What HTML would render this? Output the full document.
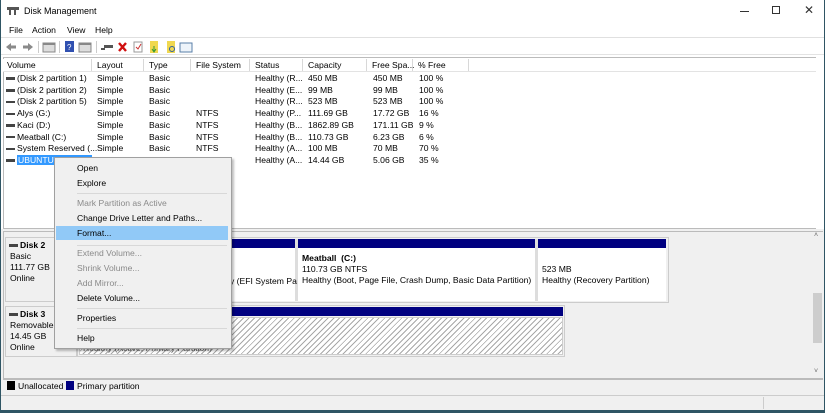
<!DOCTYPE html><html><head><meta charset="utf-8"><style>
*{margin:0;padding:0;box-sizing:border-box}
body{width:825px;height:413px;overflow:hidden;background:#2f5564;font-family:"Liberation Sans",sans-serif;font-size:8.6px;color:#000;position:relative}
.a{position:absolute}
.win{left:1px;top:0;width:823px;height:410px;background:#fff}
.t{position:absolute;white-space:nowrap}
.g{color:#8a8a8a}
.hdr{top:59px;height:13px;left:2px;width:813px;background:#fff;border-bottom:1px solid #e3e3e3}
.col{position:absolute;top:0;height:12px;border-right:1px solid #d8d8d8}
.dash{display:inline-block;width:9px;height:2.5px;background:#444;vertical-align:middle;margin-right:2px}
.blue{background:#000080}
.hatch{background:repeating-linear-gradient(135deg,#fff 0 3px,#a8a8a8 3px 4px)}
</style></head><body>
<div class="a win">
<svg class="a" style="left:6px;top:6px" width="13" height="10"><rect x="0" y="1" width="12" height="3" fill="#555"/><rect x="2" y="4" width="2" height="5" fill="#555"/><rect x="7" y="4" width="2" height="5" fill="#555"/></svg>
<div class="t" style="left:23px;top:6px;font-size:9px">Disk Management</div>
<div class="a" style="left:739px;top:11px;width:9px;height:1px;background:#333"></div>
<div class="a" style="left:771px;top:6px;width:8px;height:8px;border:1px solid #333"></div>
<div class="t" style="left:803px;top:3px;font-size:12px;color:#333">✕</div>
<div class="t" style="left:8px;top:25px">File</div>
<div class="t" style="left:31px;top:25px">Action</div>
<div class="t" style="left:66px;top:25px">View</div>
<div class="t" style="left:94px;top:25px">Help</div>
<div class="a" style="left:0;top:37px;width:823px;height:1px;background:#e0e0e0"></div>
<svg class="a" style="left:4px;top:40px" width="190" height="14">
<path d="M1 7l5-4v2.5h5v3h-5v2.5z" fill="#8a8a8a"/><path d="M28 7l-5-4v2.5h-5v3h5v2.5z" fill="#8a8a8a"/>
<rect x="33" y="1" width="1" height="12" fill="#ccc"/>
<rect x="38" y="3" width="12" height="9" fill="#ddd" stroke="#888"/><rect x="38" y="3" width="12" height="2" fill="#888"/>
<rect x="54" y="1" width="1" height="12" fill="#ccc"/>
<rect x="60" y="1" width="9" height="11" fill="#3050b0"/><text x="62" y="10" font-size="8" fill="#fff">?</text>
<rect x="74" y="3" width="12" height="9" fill="#ddd" stroke="#888"/><rect x="74" y="3" width="12" height="2" fill="#888"/>
<rect x="91" y="1" width="1" height="12" fill="#ccc"/>
<rect x="99" y="5" width="9" height="3" fill="#555"/><rect x="96" y="8" width="4" height="2" fill="#555"/>
<path d="M114 3l7 8M121 3l-7 8" stroke="#d01010" stroke-width="2.4"/>
<rect x="129" y="2" width="8" height="10" fill="#fff" stroke="#999"/><path d="M131 7l2 2 3-5" stroke="#c33" fill="none"/>
<rect x="145" y="1" width="8" height="12" fill="#f0d850"/><path d="M149 6v6M147 9l2 3 2-3" stroke="#393" fill="none"/>
<rect x="162" y="1" width="8" height="12" fill="#f0d850"/><circle cx="167" cy="9" r="2.5" fill="none" stroke="#3060a0"/>
<rect x="175" y="3" width="12" height="9" fill="#eef4fa" stroke="#5a7fa8"/>
</svg>
<div class="a" style="left:0;top:54px;width:823px;height:1px;background:#e3e3e3"></div>
<div class="a" style="left:2px;top:57px;width:813px;height:172px;border:1px solid #bbb;border-right:none;background:#fff"></div>
<div class="a hdr">
<div class="col" style="left:0;width:89px"><span class="t" style="left:4px;top:1px">Volume</span></div>
<div class="col" style="left:89px;width:52px"><span class="t" style="left:5px;top:1px">Layout</span></div>
<div class="col" style="left:141px;width:47px"><span class="t" style="left:5px;top:1px">Type</span></div>
<div class="col" style="left:188px;width:59px"><span class="t" style="left:5px;top:1px">File System</span></div>
<div class="col" style="left:247px;width:53px"><span class="t" style="left:5px;top:1px">Status</span></div>
<div class="col" style="left:300px;width:64px"><span class="t" style="left:5px;top:1px">Capacity</span></div>
<div class="col" style="left:364px;width:46px"><span class="t" style="left:5px;top:1px">Free Spa...</span></div>
<div class="col" style="left:410px;width:56px"><span class="t" style="left:5px;top:1px">% Free</span></div>
</div>
<div class="a" style="left:5px;top:73px;width:480px">
<div style="position:relative;height:93px">
<div class="t" style="top:0px;left:0"><span class="dash"></span>(Disk 2 partition 1)</div>
<div class="t" style="top:11.7px;left:0"><span class="dash"></span>(Disk 2 partition 2)</div>
<div class="t" style="top:23.4px;left:0"><span class="dash"></span>(Disk 2 partition 5)</div>
<div class="t" style="top:35.1px;left:0"><span class="dash"></span>Alys (G:)</div>
<div class="t" style="top:46.8px;left:0"><span class="dash"></span>Kaci (D:)</div>
<div class="t" style="top:58.5px;left:0"><span class="dash"></span>Meatball (C:)</div>
<div class="t" style="top:70.2px;left:0"><span class="dash"></span>System Reserved (...</div>
<div class="t" style="top:81.9px;left:0"><span class="dash"></span><span style="background:#3399ff;color:#fff;padding:0 14px 0 1px">UBUNTU 16.04</span></div>
</div></div>
<div class="a" style="left:96px;top:73px;line-height:11.7px">Simple<br>Simple<br>Simple<br>Simple<br>Simple<br>Simple<br>Simple<br>Simple</div>
<div class="a" style="left:148px;top:73px;line-height:11.7px">Basic<br>Basic<br>Basic<br>Basic<br>Basic<br>Basic<br>Basic<br>Basic</div>
<div class="a" style="left:195px;top:73px;line-height:11.7px"><br><br><br>NTFS<br>NTFS<br>NTFS<br>NTFS<br>FAT32</div>
<div class="a" style="left:254px;top:73px;line-height:11.7px">Healthy (R...<br>Healthy (E...<br>Healthy (R...<br>Healthy (P...<br>Healthy (B...<br>Healthy (B...<br>Healthy (A...<br>Healthy (A...</div>
<div class="a" style="left:307px;top:73px;line-height:11.7px">450 MB<br>99 MB<br>523 MB<br>111.69 GB<br>1862.89 GB<br>110.73 GB<br>100 MB<br>14.44 GB</div>
<div class="a" style="left:372px;top:73px;line-height:11.7px">450 MB<br>99 MB<br>523 MB<br>17.72 GB<br>171.11 GB<br>6.23 GB<br>70 MB<br>5.06 GB</div>
<div class="a" style="left:418px;top:73px;line-height:11.7px">100 %<br>100 %<br>100 %<br>16 %<br>9 %<br>6 %<br>70 %<br>35 %</div>
<div class="a" style="left:0;top:229px;width:823px;height:166px;background:#f0f0f0"></div>
<div class="a" style="left:2px;top:231px;width:820px;height:148px;border:1px solid #bbb;border-right:none;background:#f0f0f0"></div>
<div class="a" style="left:4px;top:237px;width:72px;height:65px;background:#f0f0f0;border:1px solid #ccc"></div>
<div class="t" style="left:8px;top:240px;font-weight:bold"><span class="dash"></span>Disk 2</div>
<div class="a" style="left:9px;top:251px;line-height:11px">Basic<br>111.77 GB<br>Online</div>
<div class="a" style="left:76px;top:237px;width:592px;height:66px;border:1px solid #ccc;background:#f0f0f0"></div>
<div class="a" style="left:78px;top:239px;width:587px;height:62px;background:#fff"></div>
<div class="a blue" style="left:78px;top:239px;width:216px;height:9px"></div>
<div class="a blue" style="left:297px;top:239px;width:237px;height:9px"></div>
<div class="a blue" style="left:537px;top:239px;width:128px;height:9px"></div>
<div class="a" style="left:294px;top:239px;width:3px;height:62px;background:#ddd"></div>
<div class="a" style="left:534px;top:239px;width:3px;height:62px;background:#ddd"></div>
<div class="t" style="left:229px;top:276px">y (EFI System Pa</div>
<div class="t" style="left:301px;top:253px;font-weight:bold">Meatball&nbsp; (C:)</div>
<div class="t" style="left:301px;top:264px">110.73 GB NTFS</div>
<div class="t" style="left:301px;top:275px">Healthy (Boot, Page File, Crash Dump, Basic Data Partition)</div>
<div class="t" style="left:541px;top:264px">523 MB</div>
<div class="t" style="left:541px;top:275px">Healthy (Recovery Partition)</div>
<div class="a" style="left:4px;top:306px;width:72px;height:51px;background:#f0f0f0;border:1px solid #ccc"></div>
<div class="t" style="left:8px;top:309px;font-weight:bold"><span class="dash"></span>Disk 3</div>
<div class="a" style="left:9px;top:320px;line-height:11px">Removable<br>14.45 GB<br>Online</div>
<div class="a" style="left:76px;top:305px;width:488px;height:52px;border:1px solid #ccc;background:#f0f0f0"></div>
<div class="a blue" style="left:78px;top:307px;width:484px;height:9px"></div>
<div class="a hatch" style="left:78px;top:317px;width:484px;height:38px;border:1px solid #ccc"></div>
<div class="t" style="left:82px;top:343px;color:#555">Healthy (Active, Primary Partition)</div>
<div class="a" style="left:811px;top:232px;width:11px;height:146px;background:#f0f0f0"></div>
<div class="t" style="left:813px;top:232px;font-size:7px;color:#666">˄</div>
<div class="t" style="left:813px;top:368px;font-size:7px;color:#666">˅</div>
<div class="a" style="left:812px;top:293px;width:9px;height:50px;background:#cdcdcd"></div>
<div class="a" style="left:2px;top:379px;width:820px;height:15px;border-top:1px solid #bbb;background:#f0f0f0"></div>
<div class="a" style="left:6px;top:381px;width:8px;height:9px;background:#000"></div>
<div class="t" style="left:17px;top:381px">Unallocated</div>
<div class="a blue" style="left:65px;top:381px;width:8px;height:9px"></div>
<div class="t" style="left:76px;top:381px">Primary partition</div>
<div class="a" style="left:0;top:395px;width:823px;height:15px;border-top:1px solid #ccc;background:#f0f0f0"></div>
<div class="a" style="left:762px;top:397px;width:1px;height:12px;background:#ccc"></div>
<div class="a" style="left:53px;top:157px;width:178px;height:192px;background:#f0f0f0;border:1px solid #a0a0a0;box-shadow:2px 2px 2px rgba(0,0,0,.25)"></div>
<div class="a" style="left:55px;top:226px;width:172px;height:14px;background:#91c9f7"></div>
<div class="a" style="left:76px;top:193px;width:150px;height:1px;background:#d8d8d8"></div>
<div class="a" style="left:76px;top:245px;width:150px;height:1px;background:#d8d8d8"></div>
<div class="a" style="left:76px;top:308px;width:150px;height:1px;background:#d8d8d8"></div>
<div class="a" style="left:76px;top:328px;width:150px;height:1px;background:#d8d8d8"></div>
<div class="t" style="left:76px;top:163px">Open</div>
<div class="t" style="left:76px;top:178px">Explore</div>
<div class="t g" style="left:76px;top:198px">Mark Partition as Active</div>
<div class="t" style="left:76px;top:213px">Change Drive Letter and Paths...</div>
<div class="t" style="left:76px;top:228px">Format...</div>
<div class="t g" style="left:76px;top:248px">Extend Volume...</div>
<div class="t g" style="left:76px;top:263px">Shrink Volume...</div>
<div class="t g" style="left:76px;top:278px">Add Mirror...</div>
<div class="t" style="left:76px;top:293px">Delete Volume...</div>
<div class="t" style="left:76px;top:313px">Properties</div>
<div class="t" style="left:76px;top:333px">Help</div>
</div>
</body></html>
